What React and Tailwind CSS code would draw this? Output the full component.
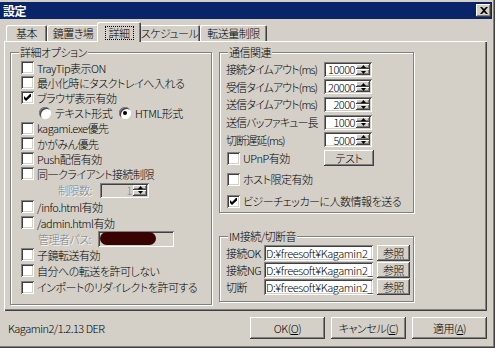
const raised = 'shadow-[inset_-1px_-1px_#404040,inset_1px_1px_#fff,inset_-2px_-2px_#808080]'
const sunken = 'shadow-[inset_1px_1px_#808080,inset_-1px_-1px_#fff,inset_2px_2px_#404040,inset_-2px_-2px_#d4d0c8]'
const greyText = 'text-[#808080] [text-shadow:1px_1px_0_#fff]'

const tabs = [
  { label: '基本', w: 'w-[41px]' },
  { label: '鏡置き場', w: 'w-[52px]' },
  { label: '詳細', w: 'w-[44px]', active: true },
  { label: 'スケジュール', w: 'w-[61px]' },
  { label: '転送量制限', w: 'w-[67px]' },
]

function Check({ checked }) {
  return (
    <span className={`flex h-[13px] w-[13px] shrink-0 items-center justify-center bg-white ${sunken}`}>
      {checked && (
        <svg width="7" height="7" viewBox="0 0 7 7">
          <path d="M0 2L2 4L6 0H7V2.5L2 7L0 5Z" fill="#000" />
        </svg>
      )}
    </span>
  )
}

function Radio({ checked }) {
  return (
    <span className="flex h-[12px] w-[12px] shrink-0 items-center justify-center rounded-full bg-white shadow-[inset_1px_1px_#808080,inset_-1px_-1px_#fff,inset_2px_2px_#404040]">
      {checked && <span className="h-[4px] w-[4px] rounded-full bg-black" />}
    </span>
  )
}

function Arrow({ down }) {
  return (
    <svg width="5" height="3" viewBox="0 0 5 3">
      <path d={down ? 'M0 0H5L2.5 3Z' : 'M0 3H5L2.5 0Z'} fill="#000" />
    </svg>
  )
}

function Spin({ value, disabled, className }) {
  return (
    <div className={`flex h-[15px] shrink-0 p-[2px] ${sunken} ${disabled ? 'bg-[#d4d0c8]' : 'bg-white'} ${className}`}>
      <span className={`flex flex-1 items-center justify-end pr-[1px] ${disabled ? 'text-[#808080]' : ''}`}>{value}</span>
      <span className="flex w-[14px] flex-col">
        <span className={`flex flex-1 items-center justify-center bg-[#d4d0c8] ${raised}`}>
          <Arrow />
        </span>
        <span className={`flex flex-1 items-center justify-center bg-[#d4d0c8] ${raised}`}>
          <Arrow down />
        </span>
      </span>
    </div>
  )
}

function Group({ title, className, children }) {
  return (
    <div className={`relative border border-[#808080] shadow-[1px_1px_#fff,inset_1px_1px_#fff] ${className}`}>
      <span className="absolute left-[8px] top-[-8px] bg-[#d4d0c8] px-[1px] leading-[14px]">{title}</span>
      {children}
    </div>
  )
}

function CheckRow({ label, checked, h = 'h-[15.2px]' }) {
  return (
    <div className={`flex items-center gap-[3px] ${h}`}>
      <Check checked={checked} />
      <span className="whitespace-nowrap">{label}</span>
    </div>
  )
}

function Button({ children, className }) {
  return (
    <button type="button" className={`flex shrink-0 items-center justify-center bg-[#d4d0c8] ${raised} ${className}`}>
      {children}
    </button>
  )
}

export default function App() {
  return (
    <div className="flex h-[348px] w-[495px] flex-col overflow-hidden bg-[#d4d0c8] pt-[2px] font-['Noto_Sans_CJK_JP',sans-serif] text-[11px] font-light leading-[14px] tracking-[-0.5px] text-black [font-feature-settings:'palt'] shadow-[inset_-1px_-1px_#404040,inset_-2px_-2px_#808080]">
      <div className="mr-[3px] flex h-[17px] items-center justify-between bg-[#0a246a] pl-[3px] pr-[1px]">
        <span className="text-[12px] font-bold text-white">設定</span>
        <Button className="h-[13px] w-[15px]">
          <svg width="8" height="7" viewBox="0 0 8 7">
            <path d="M0 0H2L4 2L6 0H8L5 3.5L8 7H6L4 5L2 7H0L3 3.5Z" fill="#000" />
          </svg>
        </Button>
      </div>

      <div className="mt-[4px] flex h-[18px] items-end pl-[6px]">
        {tabs.map((t) =>
          t.active ? (
            <div
              key={t.label}
              className={`relative z-10 -mx-[2px] -mb-px flex h-[20px] items-start justify-center rounded-t-[2px] bg-[#d4d0c8] pt-[4px] shadow-[inset_1px_1px_#fff,inset_-1px_0_#404040,inset_-2px_0_#808080] ${t.w}`}
            >
              <span className="border border-dotted border-black px-[3px] leading-[12px]">{t.label}</span>
            </div>
          ) : (
            <div
              key={t.label}
              className={`flex h-[16px] items-center justify-center whitespace-nowrap rounded-t-[2px] shadow-[inset_1px_1px_#fff,inset_-1px_0_#404040,inset_-2px_0_#808080] ${t.w}`}
            >
              {t.label}
            </div>
          ),
        )}
      </div>

      <div className="ml-[4px] mr-[8px] flex h-[270px] gap-[7px] pl-[6px] pt-[11px] shadow-[inset_1px_1px_#fff,inset_-1px_-1px_#404040,inset_-2px_-2px_#808080]">
        <Group title="詳細オプション" className="h-[253px] w-[202px] pl-[10px] pt-[7px]">
          <CheckRow label="TrayTip表示ON" />
          <CheckRow label="最小化時にタスクトレイへ入れる" />
          <CheckRow label="ブラウザ表示有効" checked />
          <div className="flex h-[15.2px] items-center pl-[18px]">
            <Radio />
            <span className="ml-[4px] w-[64px] whitespace-nowrap">テキスト形式</span>
            <Radio checked />
            <span className="ml-[4px] whitespace-nowrap">HTML形式</span>
          </div>
          <CheckRow label="kagami.exe優先" />
          <CheckRow label="かがみん優先" />
          <CheckRow label="Push配信有効" />
          <CheckRow label="同一クライアント接続制限" />
          <div className="flex h-[17px] items-center pl-[37px]">
            <span className={`w-[42px] ${greyText}`}>制限数:</span>
            <Spin value="1" disabled className="w-[49px]" />
          </div>
          <CheckRow label="/info.html有効" h="h-[16.1px]" />
          <CheckRow label="/admin.html有効" h="h-[16.1px]" />
          <div className="flex h-[16.1px] items-center pl-[17px]">
            <span className={`w-[60px] whitespace-nowrap ${greyText}`}>管理者パス:</span>
            <div className={`flex h-[16px] w-[76px] items-center bg-[#d4d0c8] px-[2px] ${sunken}`}>
              <span className="h-[13px] w-[56px] rounded-full bg-[#3a0303]" />
            </div>
          </div>
          <CheckRow label="子鏡転送有効" h="h-[16.1px]" />
          <CheckRow label="自分への転送を許可しない" h="h-[16.1px]" />
          <CheckRow label="インポートのリダイレクトを許可する" h="h-[16.1px]" />
        </Group>

        <div className="flex w-[195px] flex-col">
          <Group title="通信関連" className="h-[161px] pl-[6px] pt-[7.5px]">
            {[
              ['接続タイムアウト(ms)', '10000'],
              ['受信タイムアウト(ms)', '20000'],
              ['送信タイムアウト(ms)', '2000'],
              ['送信バッファキュー長', '1000'],
              ['切断遅延(ms)', '5000'],
            ].map(([label, value]) => (
              <div key={label} className="flex h-[17.6px] items-center">
                <span className="w-[98px] whitespace-nowrap tracking-[-0.9px]">{label}</span>
                <Spin value={value} className="w-[48px]" />
              </div>
            ))}
            <div className="flex h-[20px] items-center pl-[1px]">
              <Check />
              <span className="ml-[3px] w-[81px]">UPnP有効</span>
              <Button className="h-[16px] w-[50px]">テスト</Button>
            </div>
            <div className="flex h-[22px] items-center gap-[3px] pl-[1px]">
              <Check />
              <span>ホスト限定有効</span>
            </div>
            <div className="flex h-[22px] items-center gap-[3px] pl-[1px]">
              <Check checked />
              <span className="whitespace-nowrap">ビジーチェッカーに人数情報を送る</span>
            </div>
          </Group>

          <Group title="IM接続/切断音" className="mt-[23px] flex h-[66px] flex-col gap-px pl-[6px] pt-[8px]">
            {['接続OK', '接続NG', '切断'].map((label) => (
              <div key={label} className="flex h-[16px] items-center">
                <span className="w-[38px] whitespace-nowrap">{label}</span>
                <div className={`flex h-[16px] w-[109px] shrink-0 items-center overflow-hidden whitespace-nowrap bg-white px-[2px] tracking-[-0.4px] ${sunken}`}>
                  D:¥freesoft¥Kagamin2_
                </div>
                <Button className="ml-[4px] h-[16px] w-[33px]">参照</Button>
              </div>
            ))}
          </Group>
        </div>
      </div>

      <div className="ml-[8px] mr-[8px] mt-[6px] flex h-[22px] items-center">
        <span className="whitespace-nowrap">Kagamin2/1.2.13 DER</span>
        <div className="ml-auto flex gap-[6px]">
          <Button className="h-[22px] w-[75px]">
            OK(<span className="underline">O</span>)
          </Button>
          <Button className="h-[22px] w-[75px]">
            キャンセル(<span className="underline">C</span>)
          </Button>
          <Button className="h-[22px] w-[75px]">
            適用(<span className="underline">A</span>)
          </Button>
        </div>
      </div>
    </div>
  )
}
